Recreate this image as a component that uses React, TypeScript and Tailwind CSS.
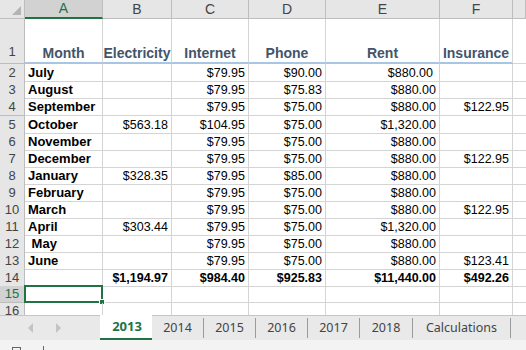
import React from "react";

const cols = ["A", "B", "C", "D", "E", "F", ""];
const heads = ["Month", "Electricity", "Internet", "Phone", "Rent", "Insurance"];

const data: string[][] = [
  ["July", "", "$79.95", "$90.00", "$880.00", ""],
  ["August", "", "$79.95", "$75.83", "$880.00", ""],
  ["September", "", "$79.95", "$75.00", "$880.00", "$122.95"],
  ["October", "$563.18", "$104.95", "$75.00", "$1,320.00", ""],
  ["November", "", "$79.95", "$75.00", "$880.00", ""],
  ["December", "", "$79.95", "$75.00", "$880.00", "$122.95"],
  ["January", "$328.35", "$79.95", "$85.00", "$880.00", ""],
  ["February", "", "$79.95", "$75.00", "$880.00", ""],
  ["March", "", "$79.95", "$75.00", "$880.00", "$122.95"],
  ["April", "$303.44", "$79.95", "$75.00", "$1,320.00", ""],
  [" May", "", "$79.95", "$75.00", "$880.00", ""],
  ["June", "", "$79.95", "$75.00", "$880.00", "$123.41"],
  ["", "$1,194.97", "$984.40", "$925.83", "$11,440.00", "$492.26"],
  ["", "", "", "", "", ""],
  ["", "", "", "", "", ""],
];

const gridCols = "grid grid-cols-[25px_78px_69px_77px_77px_114px_73px_1fr]";
const tabs = ["2014", "2015", "2016", "2017", "2018"];

export default function App() {
  return (
    <div
      className="w-[526px] h-[350px] overflow-hidden bg-white flex flex-col text-[#000]"
      style={{ fontFamily: '"Liberation Sans", Arial, sans-serif' }}
    >
      <div className="h-[315px] overflow-hidden flex flex-col shrink-0">
        {/* column headers */}
        <div className={`${gridCols} h-[19px] shrink-0 bg-[#e6e6e6]`}>
          <div className="relative border-r border-b border-[#bdbdbd]">
            <div className="absolute right-[3px] bottom-[3px] w-0 h-0 border-l-[9px] border-l-transparent border-b-[9px] border-b-[#b4b4b4]" />
          </div>
          {cols.map((c, i) =>
            i === 0 ? (
              <div
                key={i}
                className="bg-[#d2d2d2] border-r border-[#bdbdbd] border-b-2 border-b-[#217346] text-[#217346] text-[14px] leading-[17px] text-center"
              >
                {c}
              </div>
            ) : (
              <div
                key={i}
                className="border-r border-b border-[#bdbdbd] text-[#444] text-[14px] leading-[18px] text-center"
              >
                {c}
              </div>
            )
          )}
        </div>
        {/* row 1 */}
        <div className={`${gridCols} h-[45px] shrink-0`}>
          <div className="bg-[#e6e6e6] border-r border-b border-[#bdbdbd] flex items-end justify-center text-[#444] text-[13px] leading-[16px] pb-[3px]">
            1
          </div>
          {heads.map((h, i) => (
            <div
              key={i}
              className="border-r border-[#d4d4d4] border-b-2 border-b-[#a8c5e2] flex items-end justify-center overflow-visible whitespace-nowrap font-bold text-[14px] leading-[16px] text-[#44546a] pb-[1px]"
            >
              {h}
            </div>
          ))}
          <div className="border-b border-[#d4d4d4]" />
        </div>
        {/* data rows */}
        {data.map((r, ri) => {
          const rowNum = ri + 2;
          const total = ri === 12;
          const sel = rowNum === 15;
          return (
            <div
              key={ri}
              className={`${gridCols} ${rowNum === 4 ? "h-[18px]" : "h-[17px]"} shrink-0`}
            >
              <div
                className={`border-r border-b flex items-end justify-center text-[13px] leading-[16px] ${
                  sel
                    ? "bg-[#d2d2d2] text-[#217346] border-[#bdbdbd] border-r-[#217346]"
                    : "bg-[#e6e6e6] text-[#444] border-[#bdbdbd]"
                }`}
              >
                {rowNum}
              </div>
              {r.map((v, ci) =>
                ci === 0 ? (
                  <div
                    key={ci}
                    className="relative border-r border-b border-[#d4d4d4] font-bold text-[13px] leading-[16px] pt-[1px] pl-[3px] whitespace-pre"
                  >
                    {v}
                    {sel && (
                      <div className="absolute left-[-1px] top-[-1px] right-[-1px] bottom-[-1px] border-2 border-[#217346]">
                        <div className="absolute right-[-4px] bottom-[-4px] w-[6px] h-[6px] bg-[#217346] border border-white" />
                      </div>
                    )}
                  </div>
                ) : (
                  <div
                    key={ci}
                    className={`border-r border-b border-[#d4d4d4] text-right text-[12.5px] leading-[16px] pt-[1px] whitespace-nowrap ${
                      ci === 4 && ri === 0 ? "pr-[6px]" : "pr-[3px]"
                    } ${total ? "font-bold" : ""}`}
                  >
                    {v}
                  </div>
                )
              )}
              <div className="border-b border-[#d4d4d4]" />
            </div>
          );
        })}
      </div>
      {/* tab bar */}
      <div
        className="h-[25px] shrink-0 flex bg-[#e9e9e9] border-t border-[#c6c6c6] text-[#444] text-[12px]"
        style={{ fontFamily: '"Noto Sans", "Open Sans", sans-serif' }}
      >
        <div className="w-[100px] shrink-0 relative flex items-center">
          <div className="ml-[28px] w-0 h-0 border-t-[5px] border-t-transparent border-b-[5px] border-b-transparent border-r-[5px] border-r-[#c4c4c4]" />
          <div className="ml-[23px] w-0 h-0 border-t-[5px] border-t-transparent border-b-[5px] border-b-transparent border-l-[5px] border-l-[#c4c4c4]" />
        </div>
        <div className="w-[52px] shrink-0 bg-white border-b-2 border-[#217346] -mt-[1px] flex items-center justify-center font-bold text-[#217346] text-[13px] pl-[2px] pt-[1px]">
          2013
        </div>
        {tabs.map((t, i) => (
          <div key={t} className={`${i === 4 ? "w-[53px]" : "w-[52px]"} shrink-0 flex items-center relative`}>
            <span className="flex-1 text-center text-[12.5px] pt-[1px]">{t}</span>
            <div className="w-px h-[20px] bg-[#9b9b9b]" />
          </div>
        ))}
        <div className="w-[98px] shrink-0 flex items-center">
          <span className="flex-1 text-center text-[12.5px] pt-[1px]">Calculations</span>
          <div className="w-px h-[20px] bg-[#9b9b9b]" />
        </div>
      </div>
      {/* status bar */}
      <div className="flex-1 bg-[#f3f3f3] relative flex items-end pl-[12px] gap-[22px]">
        <div className="w-[9px] h-[3px] border-t border-l border-r border-[#666]" />
        <div className="w-[1px] h-[4px] bg-[#666] mb-0" />
      </div>
    </div>
  );
}
